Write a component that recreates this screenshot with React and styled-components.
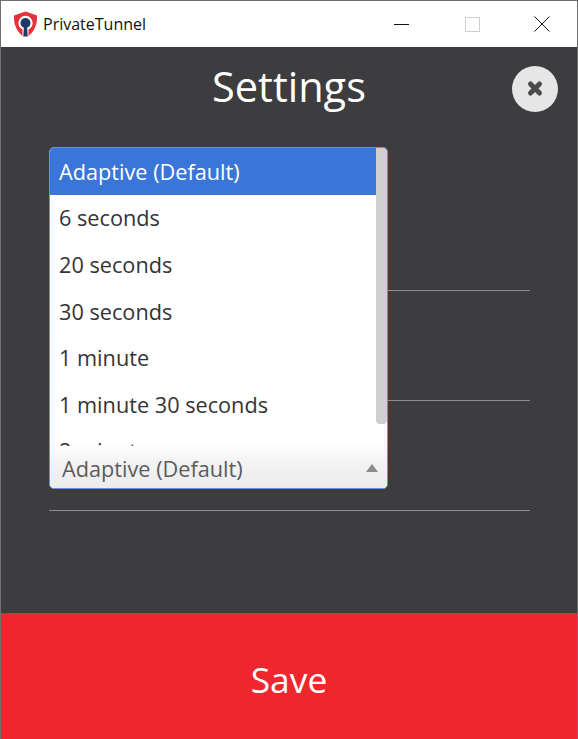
import React from "react";
import styled, { createGlobalStyle } from "styled-components";

const GlobalStyle = createGlobalStyle`
  html, body {
    margin: 0;
    padding: 0;
    height: 100%;
    background: #3d3d3f;
    font-family: "Open Sans", "Noto Sans", sans-serif;
  }
  * {
    box-sizing: border-box;
  }
`;

const Window = styled.div`
  width: 578px;
  height: 739px;
  display: flex;
  flex-direction: column;
  border: 1px solid #6f6f6f;
  border-bottom: 0;
  overflow: hidden;
`;

const TitleBar = styled.div`
  height: 46px;
  flex-shrink: 0;
  background: #ffffff;
  display: flex;
  align-items: center;
  padding-left: 12px;
`;

const AppName = styled.span`
  margin-left: 5px;
  font-family: "Open Sans", sans-serif;
  font-size: 16px;
  color: #111;
`;

const WindowControls = styled.div`
  margin-left: auto;
  display: flex;
  height: 100%;
`;

const WindowButton = styled.div`
  width: 70px;
  display: flex;
  align-items: center;
  justify-content: center;
`;

const Content = styled.main`
  flex: 1;
  min-height: 0;
  background: #3d3d3f;
  display: flex;
  flex-direction: column;
`;

const Header = styled.header`
  display: grid;
  grid-template-columns: 1fr auto 1fr;
  align-items: center;
  padding: 0 19px;
  height: 84px;
`;

const Title = styled.h1`
  grid-column: 2;
  margin: 0 0 6px;
  font-size: 41.5px;
  font-weight: 400;
  color: #ffffff;
`;

const CloseButton = styled.button`
  justify-self: end;
  width: 46px;
  height: 46px;
  padding: 0;
  border: 0;
  border-radius: 50%;
  background: #e6e6e6;
  display: flex;
  align-items: center;
  justify-content: center;
`;

const Form = styled.div`
  position: relative;
  padding: 0 47px 0 48px;
`;

const Row = styled.div`
  height: 110px;
  border-bottom: 1px solid #8e8e8e;
  &:first-of-type {
    height: 160px;
  }
`;

const Dropdown = styled.div`
  position: absolute;
  left: 48px;
  top: 16px;
  width: 339px;
  height: 342px;
  background: #ffffff;
  border: 1.5px solid #5f95e6;
  border-radius: 5px;
  overflow: hidden;
  display: flex;
  flex-direction: column;
`;

const OptionList = styled.ul`
  list-style: none;
  margin: 0;
  padding: 0;
  height: 298px;
  overflow: hidden;
  flex-shrink: 0;
`;

const Option = styled.li`
  height: 46.6px;
  padding-left: 9px;
  display: flex;
  align-items: center;
  font-size: 21.7px;
  color: ${(props) => (props.$selected ? "#ffffff" : "#333338")};
  background: ${(props) => (props.$selected ? "#3a76d8" : "transparent")};
`;

const ScrollThumb = styled.div`
  position: absolute;
  top: 0;
  right: 0;
  width: 11px;
  height: 276px;
  background: #cfcfcf;
  border-radius: 0 0 4px 4px;
`;

const SelectBar = styled.div`
  flex: 1;
  display: flex;
  align-items: center;
  justify-content: space-between;
  padding: 2px 9px 0 12px;
  font-size: 21.7px;
  color: #5c5c5c;
  background: linear-gradient(#fdfdfd, #f2f2f2 45%, #ececec);
`;

const Caret = styled.span`
  width: 0;
  height: 0;
  border-left: 6px solid transparent;
  border-right: 6px solid transparent;
  border-bottom: 8px solid #8c8c8c;
`;

const SaveButton = styled.button`
  margin-top: auto;
  height: 126px;
  flex-shrink: 0;
  width: 100%;
  padding: 6px 0 0;
  border: 0;
  background: #f0262e;
  color: #ffffff;
  font-family: inherit;
  font-size: 35.4px;
`;

const OPTIONS = [
  "Adaptive (Default)",
  "6 seconds",
  "20 seconds",
  "30 seconds",
  "1 minute",
  "1 minute 30 seconds",
  "2 minutes",
];

const ShieldLogo = () => (
  <svg width="25" height="26" viewBox="0 0 25 26">
    <path
      d="M12.5 0.5 L24 4.5 C24.5 12 22 20 15 25.5 H10 C3 20 0.5 12 1 4.5 Z"
      fill="#e8303a"
    />
    <circle cx="12.5" cy="12" r="7.2" fill="#ffffff" />
    <path d="M9.5 17 h6 v9 h-6 Z" fill="#ffffff" />
    <circle cx="12.5" cy="12" r="5" fill="#1d3a66" />
    <path d="M11 14 h3 l0.7 11.5 h-4.4 Z" fill="#1d3a66" />
  </svg>
);

const App = () => (
  <>
    <GlobalStyle />
    <Window>
      <TitleBar>
        <ShieldLogo />
        <AppName>PrivateTunnel</AppName>
        <WindowControls>
          <WindowButton>
            <svg width="16" height="17" viewBox="0 0 16 17">
              <path d="M0 8.5 H15" stroke="#111" strokeWidth="1" />
            </svg>
          </WindowButton>
          <WindowButton>
            <svg width="15" height="15" viewBox="0 0 15 15">
              <rect x="0.5" y="0.5" width="14" height="14" fill="none" stroke="#cfcfcf" />
            </svg>
          </WindowButton>
          <WindowButton>
            <svg width="16" height="16" viewBox="0 0 16 16">
              <path d="M0.5 0.5 L15.5 15.5 M15.5 0.5 L0.5 15.5" stroke="#111" strokeWidth="1" />
            </svg>
          </WindowButton>
        </WindowControls>
      </TitleBar>
      <Content>
        <Header>
          <Title>Settings</Title>
          <CloseButton aria-label="Close">
            <svg width="20" height="20" viewBox="0 0 20 20">
              <path
                d="M5.5 5 L14.5 14 M14.5 5 L5.5 14"
                stroke="#4a4a4c"
                strokeWidth="5"
                strokeLinecap="round"
              />
            </svg>
          </CloseButton>
        </Header>
        <Form>
          <Row />
          <Row />
          <Row />
          <Dropdown>
            <OptionList>
              {OPTIONS.map((option, i) => (
                <Option key={option} $selected={i === 0}>
                  {option}
                </Option>
              ))}
            </OptionList>
            <ScrollThumb />
            <SelectBar>
              Adaptive (Default)
              <Caret />
            </SelectBar>
          </Dropdown>
        </Form>
        <SaveButton>Save</SaveButton>
      </Content>
    </Window>
  </>
);

export default App;
